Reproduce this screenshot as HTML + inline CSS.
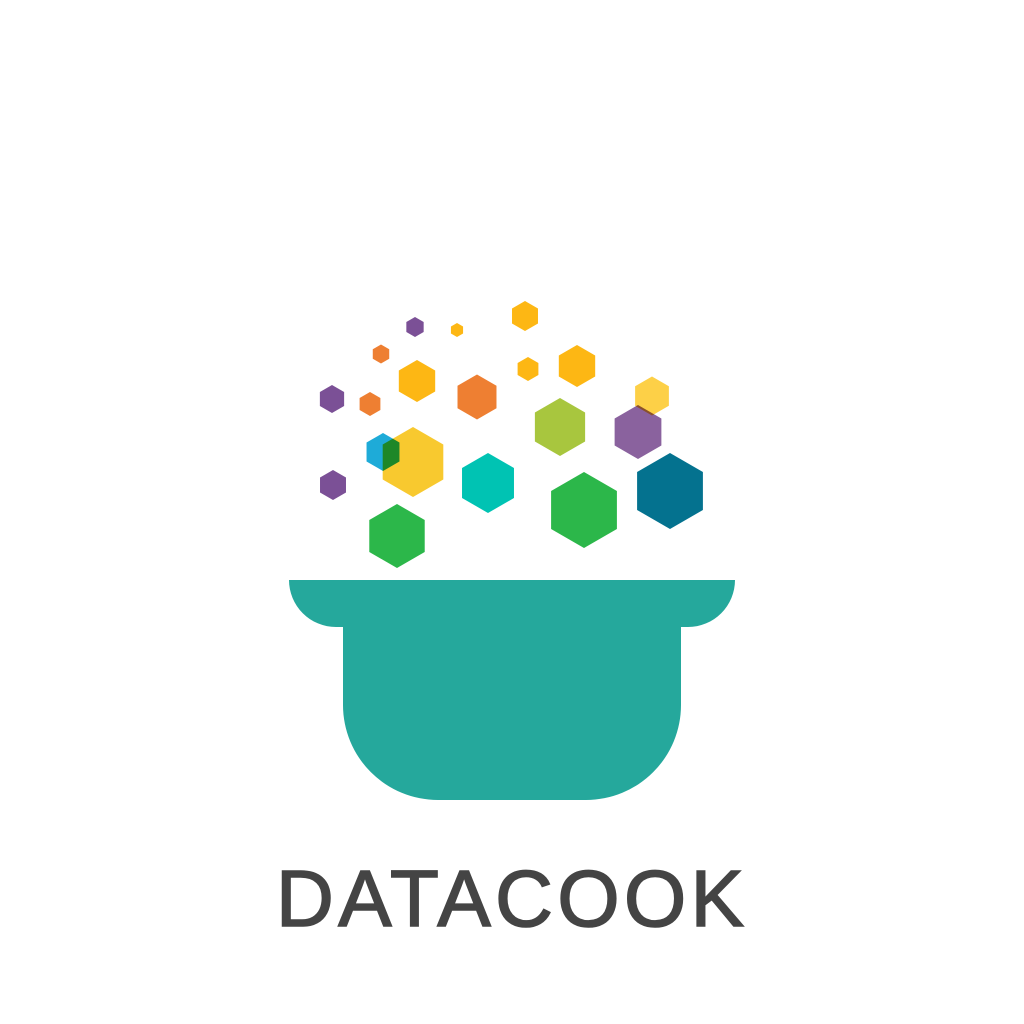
<!DOCTYPE html>
<html><head><meta charset="utf-8"><style>html,body{margin:0;padding:0;background:#fff}svg{display:block}</style></head>
<body>
<svg width="1024" height="1024" viewBox="0 0 1024 1024" xmlns="http://www.w3.org/2000/svg">
<defs><polygon id="h" points="0,-1 0.866,-0.5 0.866,0.5 0,1 -0.866,0.5 -0.866,-0.5"/></defs>
<rect width="1024" height="1024" fill="#fff"/>
<g>
<use href="#h" fill="#7B5096" transform="translate(415,327) scale(10)"/>
<use href="#h" fill="#FDB714" transform="translate(457,330) scale(7)"/>
<use href="#h" fill="#FDB714" transform="translate(525,316) scale(15)"/>
<use href="#h" fill="#EE7F32" transform="translate(381,354) scale(9.5)"/>
<use href="#h" fill="#FDB714" transform="translate(417,381) scale(21)"/>
<use href="#h" fill="#FDB714" transform="translate(528,369) scale(12)"/>
<use href="#h" fill="#FDB714" transform="translate(577,366) scale(21)"/>
<use href="#h" fill="#7B5096" transform="translate(332,399) scale(14)"/>
<use href="#h" fill="#EE7F32" transform="translate(370,404) scale(12)"/>
<use href="#h" fill="#EE7F32" transform="translate(477,397) scale(22.5)"/>
<use href="#h" fill="#A8C63E" transform="translate(560,427) scale(29)"/>
<use href="#h" fill="#2CB74A" transform="translate(584,510) scale(38)"/>
<use href="#h" fill="#04728F" transform="translate(670,491) scale(38)"/>
<use href="#h" fill="#00C3B3" transform="translate(488,483) scale(30)"/>
<use href="#h" fill="#7B5096" transform="translate(333,485) scale(15)"/>
<use href="#h" fill="#2CB74A" transform="translate(397,536) scale(32)"/>
<use href="#h" fill="#FDD047" transform="translate(652,396) scale(19.5)"/>
<use href="#h" fill="#8A629E" style="mix-blend-mode:multiply" transform="translate(638,432) scale(27)"/>
<use href="#h" fill="#1EABD8" transform="translate(383,452) scale(19)"/>
<use href="#h" fill="#F8C92F" style="mix-blend-mode:multiply" transform="translate(413,462) scale(35)"/>
</g>
<path fill="#25A89C" d="M289,580 H735 A47,47 0 0 1 688,627 H681 V705 A95,95 0 0 1 586,800 H438 A95,95 0 0 1 343,705 V627 H336 A47,47 0 0 1 289,580 Z"/>
<text x="276" y="926" font-family="Liberation Sans, DejaVu Sans, sans-serif" font-size="80" fill="#444" stroke="#444" stroke-width="1.6" textLength="468" lengthAdjust="spacing">DATACOOK</text>
</svg>
</body></html>
